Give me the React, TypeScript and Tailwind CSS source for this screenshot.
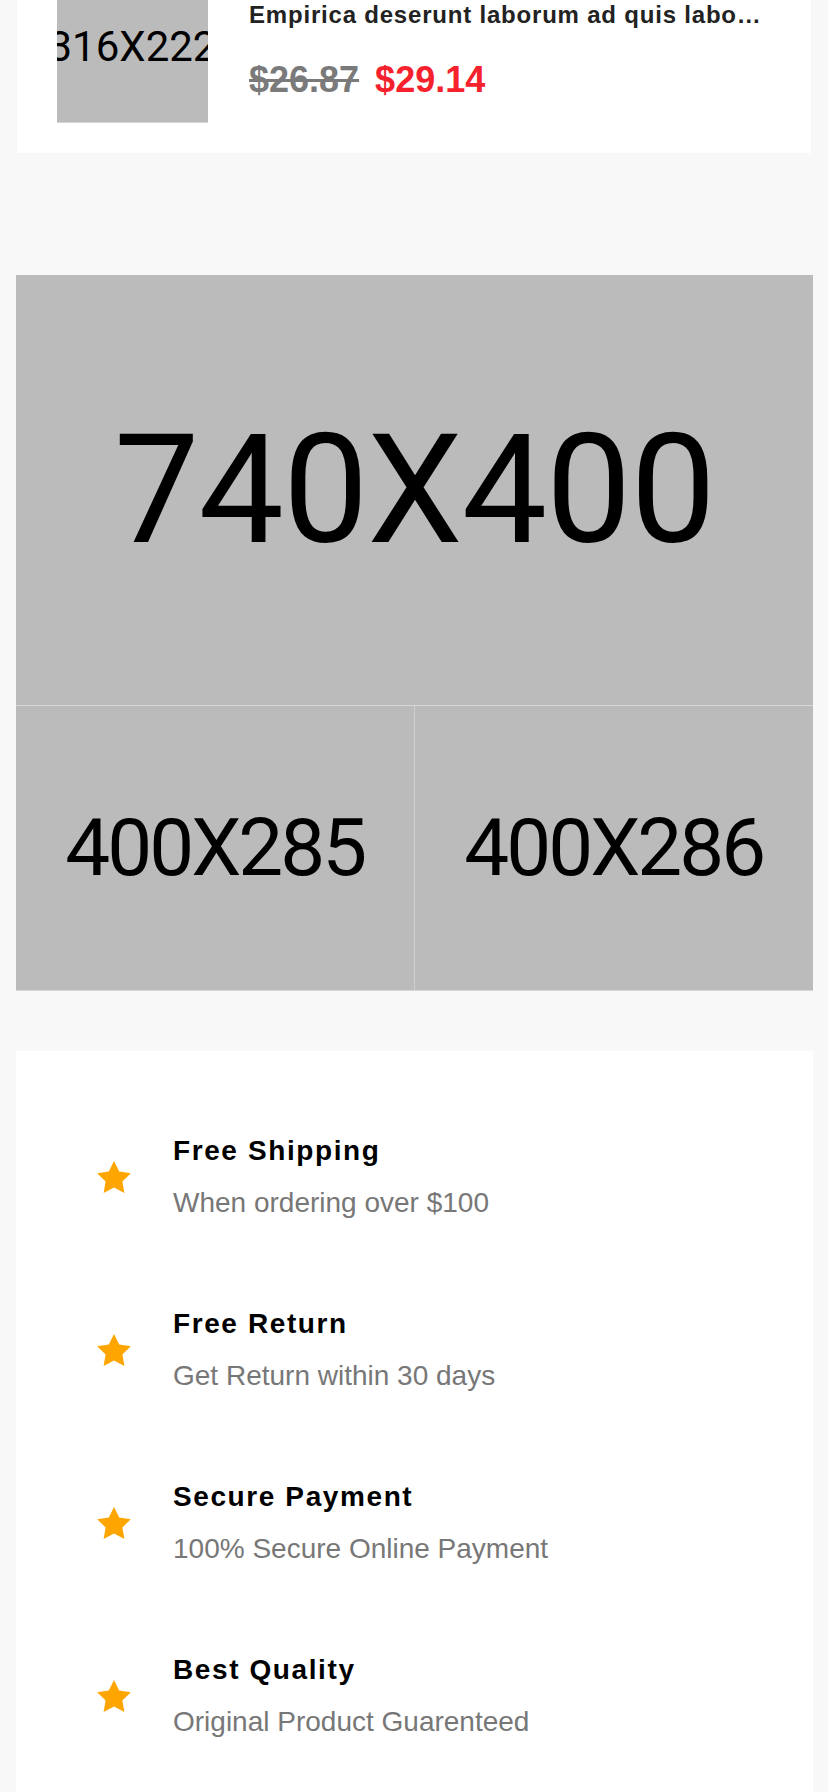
import React from "react";

const features = [
  { title: "Free Shipping", sub: "When ordering over $100" },
  { title: "Free Return", sub: "Get Return within 30 days" },
  { title: "Secure Payment", sub: "100% Secure Online Payment" },
  { title: "Best Quality", sub: "Original Product Guarenteed" },
];

function Star() {
  return (
    <svg width="34" height="32" viewBox="2 2 20 19.02" className="shrink-0">
      <polygon
        fill="#ffa500"
        points="12,2 15.09,8.26 22,9.27 17,14.14 18.18,21.02 12,17.77 5.82,21.02 7,14.14 2,9.27 8.91,8.26"
      />
    </svg>
  );
}

export default function App() {
  return (
    <div className="h-[1792px] overflow-hidden bg-[#f8f8f8] font-['Liberation_Sans',Arial,sans-serif]">
      {/* product card */}
      <div className="-mt-[58px] ml-[17px] flex w-[794px] bg-white py-[30px] pl-[40px] pr-[43px]">
        <div className="flex h-[151px] w-[151px] shrink-0 items-center justify-center overflow-hidden border-b border-[#d6d6d6] bg-[#bbbbbb]">
          <span className="whitespace-nowrap font-['Roboto',sans-serif] text-[42px] leading-none text-black">
            316X222
          </span>
        </div>
        <div className="ml-[41px] min-w-0 flex-1 pt-[30px]">
          <div className="truncate text-[24px] font-bold leading-[26px] tracking-[0.8px] text-[#222]">
            Empirica deserunt laborum ad quis laborum nostrud
          </div>
          <div className="mt-[32px] flex items-center gap-[16px] text-[36px] font-bold leading-[40px]">
            <span className="text-[#7a7a7a] line-through decoration-[#7a7a7a]">$26.87</span>
            <span className="text-[#f5222d]">$29.14</span>
          </div>
        </div>
      </div>

      {/* banner */}
      <div className="mt-[122px] ml-[16px] w-[797px]">
        <div className="flex h-[431px] items-center justify-center border-b border-[#d6d6d6] bg-[#bbbbbb]">
          <span className="font-['Roboto',sans-serif] text-[152px] leading-none tracking-[-1px] text-black">
            740X400
          </span>
        </div>
        <div className="grid h-[285px] grid-cols-2 border-b border-[#d6d6d6]">
          <div className="flex items-center justify-center border-r border-[#d0d0d0] bg-[#bbbbbb]">
            <span className="font-['Roboto',sans-serif] text-[80px] leading-none tracking-[-3px] text-black">
              400X285
            </span>
          </div>
          <div className="flex items-center justify-center bg-[#bbbbbb]">
            <span className="font-['Roboto',sans-serif] text-[80px] leading-none tracking-[-3px] text-black">
              400X286
            </span>
          </div>
        </div>
      </div>

      {/* features */}
      <div className="mt-[60px] ml-[16px] flex w-[797px] flex-col gap-[89px] bg-white pb-[100px] pl-[81px] pt-[84px]">
        {features.map((f) => (
          <div key={f.title} className="flex items-center gap-[42px]">
            <Star />
            <div className="flex flex-col gap-[20px]">
              <div className="text-[28px] font-bold leading-[32px] tracking-[1.6px] text-black">{f.title}</div>
              <div className="text-[28px] leading-[32px] text-[#777]">{f.sub}</div>
            </div>
          </div>
        ))}
      </div>
    </div>
  );
}
